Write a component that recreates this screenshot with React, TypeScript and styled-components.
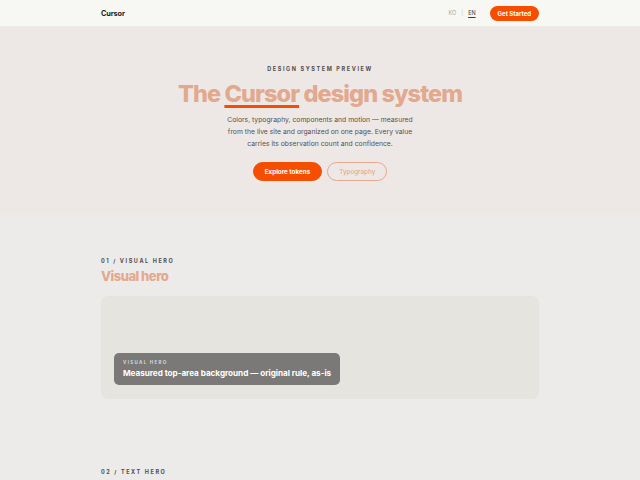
import styled, { createGlobalStyle } from "styled-components";

const GlobalStyle = createGlobalStyle`
  html, body {
    margin: 0;
    padding: 0;
    background: #ecebea;
    font-family: Inter, "Liberation Sans", sans-serif;
    -webkit-font-smoothing: antialiased;
  }
`;

const Page = styled.div`
  min-height: 480px;
  background: #ecebea;
`;

const Inner = styled.div`
  width: 438px;
  margin: 0 auto;
`;

const Header = styled.header`
  height: 27px;
  background: #f7f7f4;
  border-bottom: 1px solid #ecebe8;
  box-sizing: border-box;
`;

const HeaderRow = styled(Inner)`
  height: 100%;
  display: flex;
  align-items: center;
  justify-content: space-between;
`;

const Logo = styled.div`
  font-size: 7.3px;
  font-weight: 700;
  color: #1b1b1b;
  letter-spacing: -0.1px;
`;

const Nav = styled.div`
  display: flex;
  align-items: center;
  gap: 14px;
`;

const Lang = styled.div`
  display: flex;
  align-items: center;
  gap: 5px;
  font-size: 5.5px;
  color: #9a9896;
`;

const LangItem = styled.span<{ $active?: boolean }>`
  color: ${({ $active }) => ($active ? "#3a3836" : "#a8a6a3")};
  text-decoration: ${({ $active }) => ($active ? "underline" : "none")};
  text-underline-offset: 1.5px;
`;

const Sep = styled.span`
  color: #c8c6c3;
`;

const SmallButton = styled.button`
  height: 15px;
  padding: 0 8px;
  border: none;
  border-radius: 8px;
  background: #f54e00;
  color: #fff;
  font-family: inherit;
  font-size: 6px;
  font-weight: 700;
  cursor: pointer;
`;

const Hero = styled.section`
  background: #ede8e6;
  height: 188px;
  display: flex;
  flex-direction: column;
  align-items: center;
  padding-top: 39px;
  box-sizing: border-box;
`;

const Eyebrow = styled.div`
  font-size: 5.5px;
  font-weight: 700;
  letter-spacing: 1.6px;
  color: #4f4d4b;
  text-transform: uppercase;
`;

const Title = styled.h1`
  margin: 7px 0 0;
  font-size: 23.5px;
  line-height: 30px;
  font-weight: 800;
  letter-spacing: -0.9px;
  color: #e2a98e;
`;

const Accent = styled.span`
  text-decoration: underline;
  text-decoration-color: #f54e00;
  text-decoration-thickness: 2.5px;
  text-underline-offset: 3px;
`;

const Lead = styled.p`
  margin: 5px 0 0;
  width: 190px;
  text-align: center;
  font-size: 6.8px;
  line-height: 12px;
  color: #55524f;
`;

const Actions = styled.div`
  display: flex;
  gap: 5px;
  margin-top: 12px;
`;

const Btn = styled.button<{ $outline?: boolean }>`
  height: 19px;
  padding: 0 11px;
  border-radius: 10px;
  font-family: inherit;
  font-size: 6.3px;
  cursor: pointer;
  border: 1px solid ${({ $outline }) => ($outline ? "#e8a88e" : "#f54e00")};
  background: ${({ $outline }) => ($outline ? "transparent" : "#f54e00")};
  color: ${({ $outline }) => ($outline ? "#e8a88e" : "#fff")};
  font-weight: ${({ $outline }) => ($outline ? 500 : 700)};
`;

const Section = styled(Inner)`
  padding-top: 43px;
`;

const SectionLabel = styled.div`
  font-size: 5.5px;
  font-weight: 700;
  letter-spacing: 1.6px;
  color: #4f4d4b;
`;

const SectionTitle = styled.h2`
  margin: 3px 0 0;
  font-size: 13px;
  line-height: 18px;
  font-weight: 800;
  letter-spacing: -0.5px;
  color: #e2a98e;
`;

const Card = styled.div`
  margin-top: 11px;
  height: 103px;
  border-radius: 7px;
  background: #e6e4df;
  display: flex;
  align-items: flex-end;
  padding: 0 13px 14px;
  box-sizing: border-box;
`;

const Caption = styled.div`
  background: #7b7977;
  border-radius: 5px;
  padding: 7px 9px 7px;
  color: #fff;
`;

const CaptionLabel = styled.div`
  font-size: 4.5px;
  font-weight: 700;
  letter-spacing: 1.3px;
  color: #d8d6d3;
`;

const CaptionText = styled.div`
  margin-top: 3px;
  font-size: 8.2px;
  font-weight: 700;
  letter-spacing: -0.05px;
`;

const NextSection = styled(Inner)`
  padding-top: 70px;
`;

export default function App() {
  return (
    <Page>
      <GlobalStyle />
      <Header>
        <HeaderRow>
          <Logo>Cursor</Logo>
          <Nav>
            <Lang>
              <LangItem>KO</LangItem>
              <Sep>|</Sep>
              <LangItem $active>EN</LangItem>
            </Lang>
            <SmallButton>Get Started</SmallButton>
          </Nav>
        </HeaderRow>
      </Header>
      <Hero>
        <Eyebrow>Design system preview</Eyebrow>
        <Title>
          The <Accent>Cursor</Accent> design system
        </Title>
        <Lead>
          Colors, typography, components and motion — measured from the live
          site and organized on one page. Every value carries its observation
          count and confidence.
        </Lead>
        <Actions>
          <Btn>Explore tokens</Btn>
          <Btn $outline>Typography</Btn>
        </Actions>
      </Hero>
      <Section>
        <SectionLabel>01 / VISUAL HERO</SectionLabel>
        <SectionTitle>Visual hero</SectionTitle>
        <Card>
          <Caption>
            <CaptionLabel>VISUAL HERO</CaptionLabel>
            <CaptionText>Measured top-area background — original rule, as-is</CaptionText>
          </Caption>
        </Card>
      </Section>
      <NextSection>
        <SectionLabel>02 / TEXT HERO</SectionLabel>
      </NextSection>
    </Page>
  );
}
